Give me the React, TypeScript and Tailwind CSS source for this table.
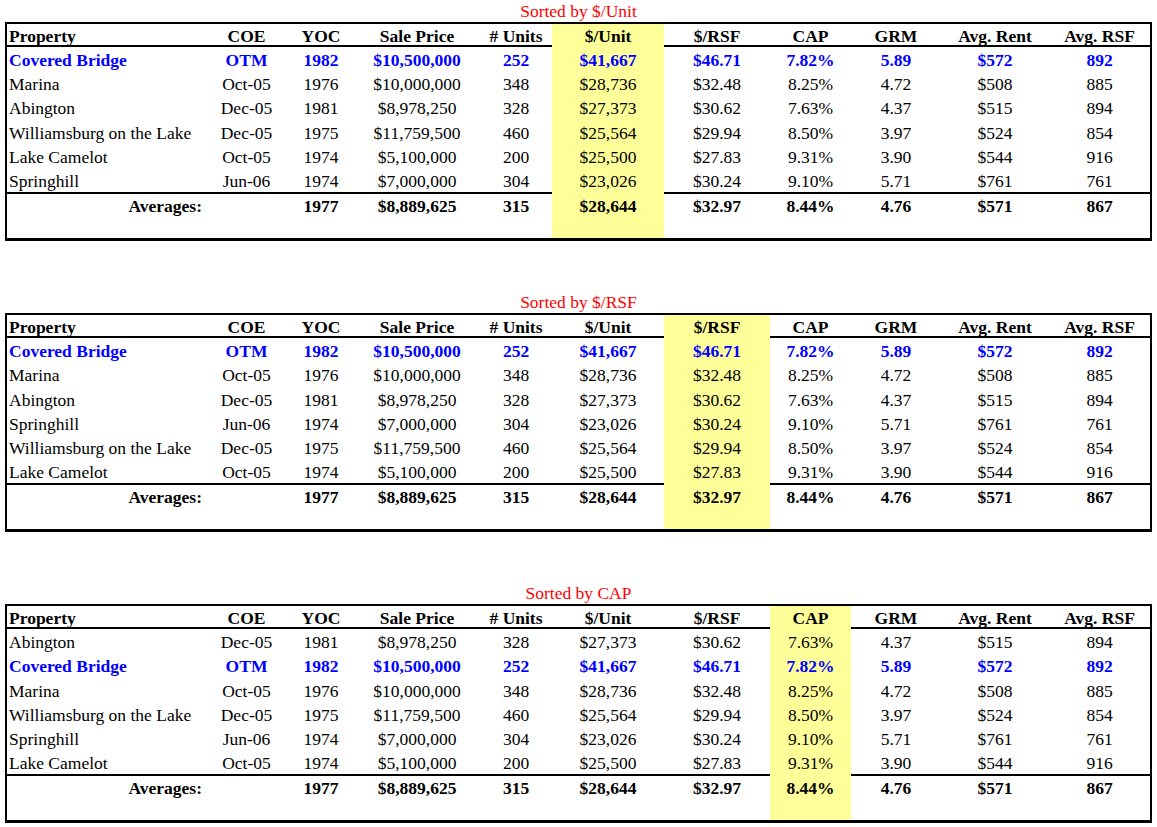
import React from "react";

type Row = string[];

const headers = ["Property", "COE", "YOC", "Sale Price", "# Units", "$/Unit", "$/RSF", "CAP", "GRM", "Avg. Rent", "Avg. RSF"];

const props: Record<string, Row> = {
  covered: ["Covered Bridge", "OTM", "1982", "$10,500,000", "252", "$41,667", "$46.71", "7.82%", "5.89", "$572", "892"],
  marina: ["Marina", "Oct-05", "1976", "$10,000,000", "348", "$28,736", "$32.48", "8.25%", "4.72", "$508", "885"],
  abington: ["Abington", "Dec-05", "1981", "$8,978,250", "328", "$27,373", "$30.62", "7.63%", "4.37", "$515", "894"],
  williamsburg: ["Williamsburg on the Lake", "Dec-05", "1975", "$11,759,500", "460", "$25,564", "$29.94", "8.50%", "3.97", "$524", "854"],
  camelot: ["Lake Camelot", "Oct-05", "1974", "$5,100,000", "200", "$25,500", "$27.83", "9.31%", "3.90", "$544", "916"],
  springhill: ["Springhill", "Jun-06", "1974", "$7,000,000", "304", "$23,026", "$30.24", "9.10%", "5.71", "$761", "761"],
};

const averages: Row = ["Averages:", "", "1977", "$8,889,625", "315", "$28,644", "$32.97", "8.44%", "4.76", "$571", "867"];

const tables = [
  { title: "Sorted by $/Unit", hl: 5, order: ["covered", "marina", "abington", "williamsburg", "camelot", "springhill"] },
  { title: "Sorted by $/RSF", hl: 6, order: ["covered", "marina", "abington", "springhill", "williamsburg", "camelot"] },
  { title: "Sorted by CAP", hl: 7, order: ["abington", "covered", "marina", "williamsburg", "springhill", "camelot"] },
];

// column widths measured off the sheet
const cols = "grid grid-cols-[198px_83px_66px_126px_72px_112px_106px_81px_90px_108px_101px]";

function Cells({ row, hl, avg }: { row: Row; hl: number; avg?: boolean }) {
  return (
    <>
      {row.map((cell, i) => {
        let align = "text-center";
        if (i === 0) align = avg ? "text-right pr-[3px]" : "text-left pl-[2px]";
        return (
          <div key={i} className={`${align} whitespace-nowrap ${i === hl ? "bg-[#ffff99]" : ""}`}>
            {cell}
          </div>
        );
      })}
    </>
  );
}

function SortedTable({ title, hl, order }: { title: string; hl: number; order: string[] }) {
  return (
    <div className="flex flex-col">
      <div className="h-[22px] w-[1147px] ml-[5px] text-center text-[#ff0000] leading-[22px]">{title}</div>
      <div className="ml-[5px] w-[1147px] border-2 border-b-[3px] border-black">
        <div className={`${cols} h-[23px] leading-[24px] font-bold border-b-2 border-black`}>
          <Cells row={headers} hl={hl} />
        </div>
        {order.map((key) => {
          const blue = key === "covered";
          return (
            <div
              key={key}
              className={`${cols} h-[24.2px] leading-[26px] ${blue ? "font-bold text-[#0000ff]" : "text-black"}`}
            >
              <Cells row={props[key]} hl={hl} />
            </div>
          );
        })}
        <div className={`${cols} h-[26px] leading-[25px] font-bold border-t-2 border-black`}>
          <Cells row={averages} hl={hl} avg />
        </div>
        <div className={`${cols} h-[20px]`}>
          <Cells row={Array(11).fill("")} hl={hl} />
        </div>
      </div>
    </div>
  );
}

export default function App() {
  return (
    <div className="w-[1157px] h-[827px] bg-white overflow-hidden text-[17.5px] text-black font-['Liberation_Serif','Times_New_Roman',serif]">
      <div className="flex flex-col gap-[50px]">
        {tables.map((t) => (
          <SortedTable key={t.title} title={t.title} hl={t.hl} order={t.order} />
        ))}
      </div>
    </div>
  );
}
